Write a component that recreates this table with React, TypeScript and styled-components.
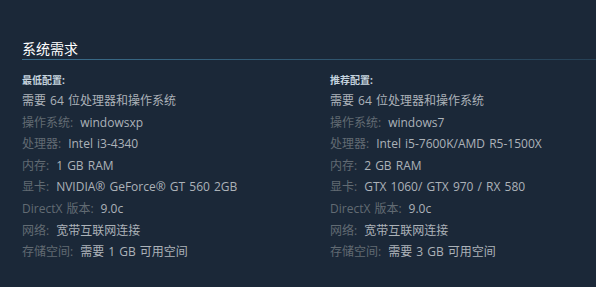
import React from "react";
import styled, { createGlobalStyle } from "styled-components";

const Global = createGlobalStyle`
  html, body { margin: 0; padding: 0; background: #1b2838; }
  body { font-family: "Open Sans", "Noto Sans CJK SC", Arial, sans-serif; }
`;

const Page = styled.div`
  width: 596px;
  height: 287px;
  background: #1b2838;
  padding: 39px 0 0 22px;
  box-sizing: border-box;
  overflow: hidden;
`;

const Title = styled.h2`
  margin: 0;
  font-size: 14px;
  font-weight: normal;
  line-height: 20px;
  color: #ffffff;
  padding-bottom: 1px;
  background-image: linear-gradient(to right, #3b6e8c 0%, rgba(59, 110, 140, 0.35) 100%);
  background-repeat: no-repeat;
  background-position: left bottom;
  background-size: 100% 1px;
`;

const Columns = styled.div`
  display: grid;
  grid-template-columns: 308px 1fr;
  margin-top: 13px;
`;

const Col = styled.div`
  display: flex;
  flex-direction: column;
`;

const Heading = styled.div`
  font-size: 10px;
  line-height: 14px;
  font-weight: bold;
  color: #c6d4df;
  margin-bottom: 6px;
`;

const List = styled.ul`
  list-style: none;
  margin: 0;
  padding: 0;
  display: flex;
  flex-direction: column;
  gap: 5px;
`;

const Row = styled.li`
  font-size: 12px;
  line-height: 16.6px;
  color: #acb2b8;
  white-space: nowrap;
  word-spacing: 1px;
`;

const Label = styled.span`
  color: #626b73;
  margin-right: 7px;
`;

type Req = { heading: string; rows: [string, string][] };

const data: Req[] = [
  {
    heading: "最低配置:",
    rows: [
      ["", "需要 64 位处理器和操作系统"],
      ["操作系统:", "windowsxp"],
      ["处理器:", "Intel i3-4340"],
      ["内存:", "1 GB RAM"],
      ["显卡:", "NVIDIA® GeForce® GT 560 2GB"],
      ["DirectX 版本:", "9.0c"],
      ["网络:", "宽带互联网连接"],
      ["存储空间:", "需要 1 GB 可用空间"],
    ],
  },
  {
    heading: "推荐配置:",
    rows: [
      ["", "需要 64 位处理器和操作系统"],
      ["操作系统:", "windows7"],
      ["处理器:", "Intel i5-7600K/AMD R5-1500X"],
      ["内存:", "2 GB RAM"],
      ["显卡:", "GTX 1060/ GTX 970 / RX 580"],
      ["DirectX 版本:", "9.0c"],
      ["网络:", "宽带互联网连接"],
      ["存储空间:", "需要 3 GB 可用空间"],
    ],
  },
];

export default function App() {
  return (
    <>
      <Global />
      <Page>
        <Title>系统需求</Title>
        <Columns>
          {data.map((col) => (
            <Col key={col.heading}>
              <Heading>{col.heading}</Heading>
              <List>
                {col.rows.map(([l, v], i) => (
                  <Row key={i}>
                    {l && <Label>{l}</Label>}
                    {v}
                  </Row>
                ))}
              </List>
            </Col>
          ))}
        </Columns>
      </Page>
    </>
  );
}
